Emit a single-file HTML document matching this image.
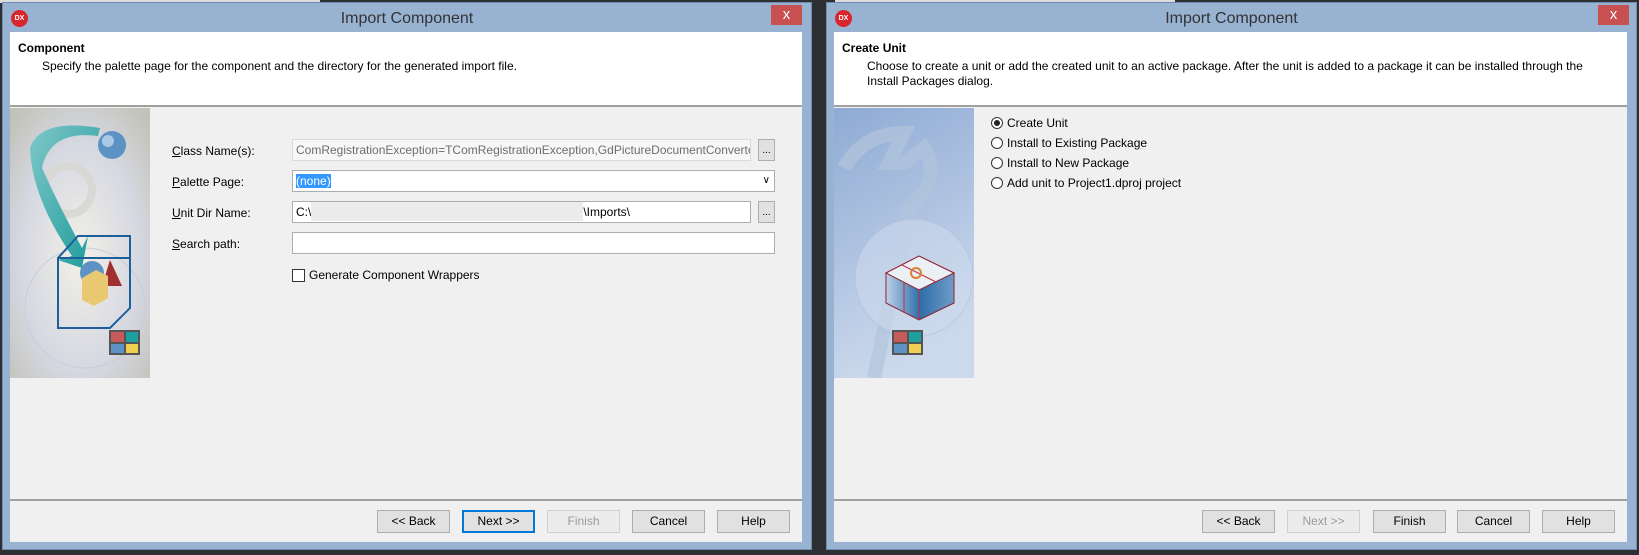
<!DOCTYPE html>
<html><head><meta charset="utf-8"><style>
*{margin:0;padding:0;box-sizing:border-box}
body{width:1639px;height:555px;background:#2d2f33;position:relative;overflow:hidden;font-family:"Liberation Sans",sans-serif;font-size:11.5px;color:#000}
.a{position:absolute}
.frame{position:absolute;background:#98b2d2;border:1px solid #6f8db3}
.title{position:absolute;left:0;right:0;top:0;height:30px;text-align:center;font-size:16px;line-height:32px;color:#333}
.dx{position:absolute;left:8px;top:7px;width:17px;height:17px;border-radius:50%;background:#d9262c;color:#fff;font-size:7px;font-weight:bold;text-align:center;line-height:17px}
.close{position:absolute;top:2px;width:31px;height:20px;background:#c75050;color:#fff;text-align:center;font-size:15px;line-height:20px}
.client{position:absolute;background:#f0f0f0}
.hdr{position:absolute;left:0;right:0;top:0;height:75px;background:#fff;border-bottom:2px solid #a0a0a0}
.btn{position:absolute;top:510px;width:73px;height:23px;background:#e1e1e1;border:1px solid #adadad;text-align:center;line-height:21px;font-size:12px}
.fld{position:absolute;height:22px;background:#fff;border:1px solid #abadb3;line-height:20px;padding-left:3px;font-size:12px;white-space:nowrap;overflow:hidden}
.eb{position:absolute;width:17px;height:22px;background:#e1e1e1;border:1px solid #adadad;font-size:10px;text-align:center;line-height:22px}
.lbl{position:absolute;left:172px;font-size:12px}
.rad{position:absolute;left:991px;width:12px;height:12px;border:1px solid #333;border-radius:50%;background:#fff}
.rt{position:absolute;left:1007px;font-size:12px}
</style></head><body>
<div class="a" style="left:0;top:0;width:320px;height:3px;background:#dcdcdc"></div>
<div class="a" style="left:835px;top:0;width:340px;height:3px;background:#dcdcdc"></div>

<!-- left dialog -->
<div class="frame" style="left:2px;top:2px;width:810px;height:548px">
 <div class="dx">DX</div>
 <div class="title">Import Component</div>
 <div class="close" style="left:768px">x</div>
</div>
<div class="client" style="left:10px;top:32px;width:792px;height:510px">
 <div class="hdr"></div>
 <div class="a" style="left:8px;top:9px;font-weight:bold;font-size:12px">Component</div>
 <div class="a" style="left:32px;top:27px;font-size:12px">Specify the palette page for the component and the directory for the generated import file.</div>
 <div class="a" style="left:0;right:0;top:467px;height:2px;background:#a0a0a0"></div>
</div>
<svg class="a" style="left:10px;top:108px" width="140" height="270" viewBox="0 0 140 270">
 <defs><radialGradient id="g1" cx="0.5" cy="0.55" r="0.7"><stop offset="0" stop-color="#f2f0e6"/><stop offset="0.6" stop-color="#d6d8e2"/><stop offset="1" stop-color="#c2c2b8"/></radialGradient>
 <linearGradient id="ar" x1="0" y1="0" x2="1" y2="1"><stop offset="0" stop-color="#7fc7c8"/><stop offset="1" stop-color="#1a9a9a"/></linearGradient></defs>
 <rect width="140" height="270" fill="url(#g1)"/>
 <circle cx="58" cy="82" r="24" fill="none" stroke="#d8d8d4" stroke-width="8"/>
 <circle cx="75" cy="200" r="60" fill="none" stroke="#c8ccd8" stroke-width="1"/>
 <path d="M20 40 Q30 10 90 20 L88 28 Q40 22 32 60 Q50 100 72 140 L78 128 L72 160 L48 152 L62 148 Q22 90 20 40Z" fill="url(#ar)"/>
 <circle cx="102" cy="37" r="14" fill="#5d92c4"/>
 <circle cx="98" cy="33" r="6" fill="#a9c9e6"/>
 <g stroke="#1d5f9a" stroke-width="2" fill="none"><path d="M48 150 H120 V200 L100 220 H48 V150Z M48 150 L68 128 H120 L120 150 M120 128 L120 195"/></g>
 <circle cx="82" cy="165" r="12" fill="#5d92c4"/>
 <path d="M100 152 L112 178 L92 178Z" fill="#a03030"/>
 <path d="M72 170 L86 162 L98 168 L98 190 L84 198 L72 192Z" fill="#e8c870"/>
 <rect x="99" y="222" width="31" height="25" fill="#555"/>
 <rect x="101" y="224" width="13" height="10" fill="#c75a5a"/><rect x="116" y="224" width="12" height="10" fill="#1ea0a0"/>
 <rect x="101" y="236" width="13" height="9" fill="#5d92c4"/><rect x="116" y="236" width="12" height="9" fill="#f0d050"/>
</svg>
<div class="lbl" style="top:144px"><u>C</u>lass Name(s):</div>
<div class="fld" style="left:292px;top:139px;width:459px;color:#6d6d6d;background:#f7f7f7;border-color:#dadada">ComRegistrationException=TComRegistrationException,GdPictureDocumentConverte</div>
<div class="eb" style="left:758px;top:139px">...</div>
<div class="lbl" style="top:175px"><u>P</u>alette Page:</div>
<div class="fld" style="left:292px;top:170px;width:483px"><span style="background:#3399ff;color:#fff">(none)</span><span style="position:absolute;right:4px;top:0;font-size:10px">&#8744;</span></div>
<div class="lbl" style="top:206px"><u>U</u>nit Dir Name:</div>
<div class="fld" style="left:292px;top:201px;width:459px">C:\<span style="display:inline-block;width:272px;height:19px;background:#ececec;vertical-align:top"></span>\Imports\</div>
<div class="eb" style="left:758px;top:201px">...</div>
<div class="lbl" style="top:237px"><u>S</u>earch path:</div>
<div class="fld" style="left:292px;top:232px;width:483px"></div>
<div class="a" style="left:292px;top:269px;width:13px;height:13px;border:1px solid #333;background:#fff"></div>
<div class="a" style="left:309px;top:268px;font-size:12px">Generate Component Wrappers</div>
<div class="btn" style="left:377px">&lt;&lt; Back</div>
<div class="btn" style="left:462px;border-color:#0078d7;border-width:2px;line-height:19px">Next &gt;&gt;</div>
<div class="btn" style="left:547px;color:#9a9a9a;background:#ececec;border-color:#d0d0d0">Finish</div>
<div class="btn" style="left:632px">Cancel</div>
<div class="btn" style="left:717px">Help</div>

<!-- right dialog -->
<div class="frame" style="left:826px;top:2px;width:811px;height:548px">
 <div class="dx">DX</div>
 <div class="title">Import Component</div>
 <div class="close" style="left:771px">x</div>
</div>
<div class="client" style="left:834px;top:32px;width:793px;height:510px">
 <div class="hdr"></div>
 <div class="a" style="left:8px;top:9px;font-weight:bold;font-size:12px">Create Unit</div>
 <div class="a" style="left:33px;top:27px;font-size:12px;line-height:15px;width:740px">Choose to create a unit or add the created unit to an active package. After the unit is added to a package it can be installed through the Install Packages dialog.</div>
 <div class="a" style="left:0;right:0;top:467px;height:2px;background:#a0a0a0"></div>
</div>
<svg class="a" style="left:834px;top:108px" width="140" height="270" viewBox="0 0 140 270">
 <defs><linearGradient id="g2" x1="0" y1="0" x2="0.3" y2="1"><stop offset="0" stop-color="#8eaad4"/><stop offset="1" stop-color="#ccd9ec"/></linearGradient>
 <linearGradient id="bx" x1="0" y1="0" x2="1" y2="0"><stop offset="0" stop-color="#bcd2ea"/><stop offset="0.5" stop-color="#2f6ea8"/><stop offset="1" stop-color="#6f9cc8"/></linearGradient></defs>
 <rect width="140" height="270" fill="url(#g2)"/>
 <path d="M10 60 Q30 25 70 25 L55 55 L70 55 L90 40 Q110 70 75 100 L40 270" fill="none" stroke="#b2c4dc" stroke-width="14" opacity="0.7"/>
 <circle cx="80" cy="170" r="59" fill="#d0dcef" opacity="0.5" stroke="#aebfdc"/>
 <path d="M52 165 L85 148 L120 165 L120 195 L85 212 L52 195Z" fill="url(#bx)" stroke="#902030"/>
 <path d="M52 165 L85 148 L120 165 L85 182Z" fill="#eaf0f4" stroke="#902030"/>
 <path d="M85 182 V212 M68 157 L102 174 M70 205 V174" stroke="#c03040" fill="none"/>
 <circle cx="82" cy="165" r="5" fill="none" stroke="#e08030" stroke-width="2"/>
 <rect x="58" y="222" width="31" height="25" fill="#555"/>
 <rect x="60" y="224" width="13" height="10" fill="#c75a5a"/><rect x="75" y="224" width="12" height="10" fill="#1ea0a0"/>
 <rect x="60" y="236" width="13" height="9" fill="#5d92c4"/><rect x="75" y="236" width="12" height="9" fill="#f0d050"/>
</svg>
<div class="rad" style="top:117px"><div style="position:absolute;left:2px;top:2px;width:6px;height:6px;border-radius:50%;background:#222"></div></div>
<div class="rt" style="top:116px">Create Unit</div>
<div class="rad" style="top:137px"></div><div class="rt" style="top:136px">Install to Existing Package</div>
<div class="rad" style="top:157px"></div><div class="rt" style="top:156px">Install to New Package</div>
<div class="rad" style="top:177px"></div><div class="rt" style="top:176px">Add unit to Project1.dproj project</div>
<div class="btn" style="left:1202px">&lt;&lt; Back</div>
<div class="btn" style="left:1287px;color:#9a9a9a;background:#ececec;border-color:#d0d0d0">Next &gt;&gt;</div>
<div class="btn" style="left:1373px">Finish</div>
<div class="btn" style="left:1457px">Cancel</div>
<div class="btn" style="left:1542px">Help</div>
</body></html>
